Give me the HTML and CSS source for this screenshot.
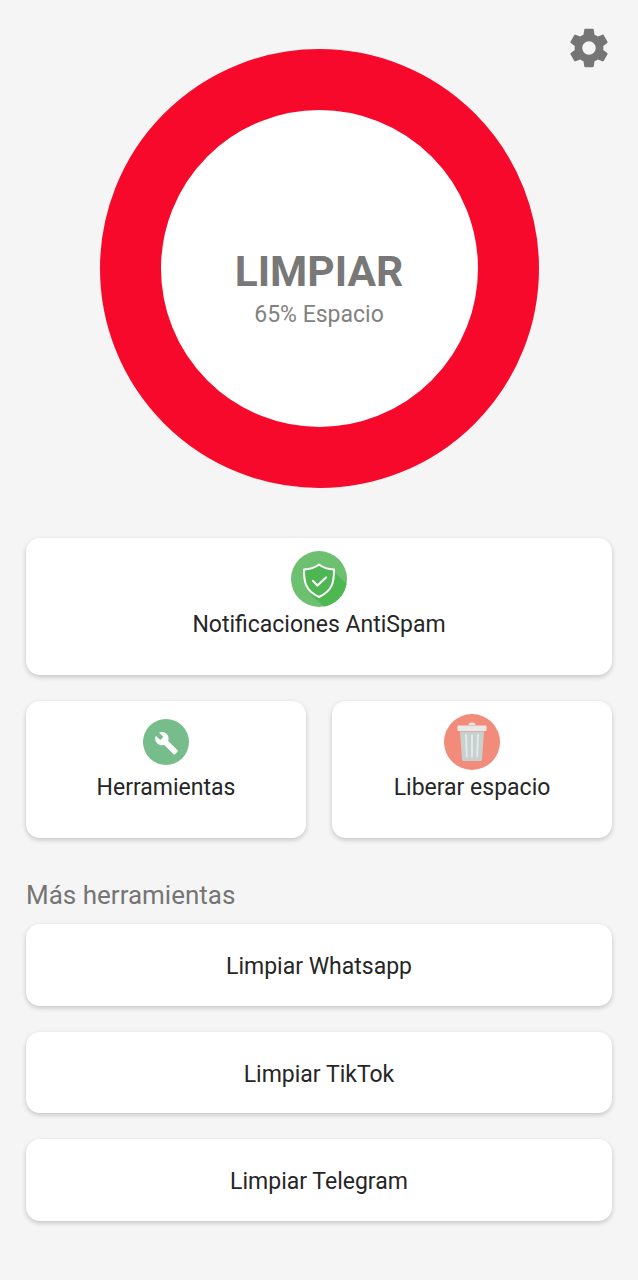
FILE: index.html
```html
<!DOCTYPE html>
<html lang="es">
<head>
    <meta charset="UTF-8">
    <meta name="viewport" content="width=device-width, initial-scale=1.0">
    <title>Limpiar</title>
    <link rel="stylesheet" href="styles.css">
</head>
<body>
    <div class="page">
        <section class="hero">
            <button class="settings" aria-label="Ajustes">
                <svg viewBox="0 0 24 24" width="46" height="46">
                    <path fill="#757575" fill-rule="evenodd" d="M19.43 12.98c.04-.32.07-.64.07-.98s-.03-.66-.07-.98l2.11-1.65c.19-.15.24-.42.12-.64l-2-3.46c-.12-.22-.39-.3-.61-.22l-2.49 1c-.52-.4-1.08-.73-1.69-.98l-.38-2.65C14.46 2.18 14.25 2 14 2h-4c-.25 0-.46.18-.49.42l-.38 2.65c-.61.25-1.17.59-1.69.98l-2.49-1c-.23-.09-.49 0-.61.22l-2 3.46c-.13.22-.07.49.12.64l2.11 1.65c-.04.32-.07.65-.07.98s.03.66.07.98l-2.11 1.65c-.19.15-.24.42-.12.64l2 3.46c.12.22.39.3.61.22l2.49-1c.52.4 1.08.73 1.69.98l.38 2.65c.03.24.24.42.49.42h4c.25 0 .46-.18.49-.42l.38-2.65c.61-.25 1.17-.59 1.69-.98l2.49 1c.23.09.49 0 .61-.22l2-3.46c.12-.22.07-.49-.12-.64l-2.11-1.65zM12 15.5c-1.93 0-3.5-1.57-3.5-3.5s1.57-3.5 3.5-3.5 3.5 1.57 3.5 3.5-1.57 3.5-3.5 3.5z"/>
                </svg>
            </button>
            <div class="ring">
                <div class="ring-title">LIMPIAR</div>
                <div class="ring-sub">65% Espacio</div>
            </div>
        </section>

        <section class="tools">
            <div class="card card-wide">
                <svg class="icon" viewBox="0 0 56 56" width="56" height="56">
                    <circle cx="28" cy="28" r="28" fill="#6cc070"/>
                    <path fill="#4cb84f" d="M42 20 L55.500 33 A28 28 0 0 1 33 55.500 L20 44 Z"/>
                    <path fill="#4fb654" stroke="#fff" stroke-width="2" stroke-linejoin="round" d="M28 13.500c4 3.200 9 4.800 15 5 0 11-.5 21-15 27.500-14.500-6.500-15-16.500-15-27.500 6-.2 11-1.800 15-5z"/>
                    <path fill="none" stroke="#fff" stroke-width="2.200" stroke-linecap="round" stroke-linejoin="round" d="M22 30l4.500 4.500 8.500-8"/>
                </svg>
                <span class="card-label">Notificaciones AntiSpam</span>
            </div>
            <div class="card-row">
                <div class="card">
                    <svg class="icon icon-tool" viewBox="0 0 46 46" width="46" height="46">
                        <circle cx="23" cy="23" r="23" fill="#77bd8b"/>
                        <path fill="#fff" d="M34.500 31.300 25.200 22c.9-2.400.4-5.200-1.600-7.100-2.100-2.100-5.200-2.500-7.600-1.300l4.400 4.400-3.100 3.100-4.500-4.400c-1.200 2.500-.7 5.500 1.400 7.600 1.900 1.900 4.700 2.500 7.100 1.600l9.300 9.300c.4.400 1 .4 1.400 0l2.400-2.400c.5-.4.5-1.100.1-1.500z"/>
                    </svg>
                    <span class="card-label">Herramientas</span>
                </div>
                <div class="card">
                    <svg class="icon" viewBox="0 0 56 56" width="56" height="56">
                        <circle cx="28" cy="28" r="28" fill="#f28b7a"/>
                        <path fill="#e3e6e4" d="M25 10c0-1 1.300-1.500 3-1.500s3 .5 3 1.500l1 1h-8z"/>
                        <path fill="#e8eaea" d="M14.500 11.500h27c.8 0 1 .5 1 1v3.500c0 .5-.3 1-1 1h-27c-.7 0-1-.5-1-1v-3.500c0-.5.2-1 1-1z"/>
                        <path fill="#c8cfcf" d="M16 17.500h24l-2 28c-.1 1-.8 1.500-1.500 1.500h-17c-.7 0-1.400-.5-1.500-1.500z"/>
                        <path fill="none" stroke="#e6eaea" stroke-width="1.800" stroke-linecap="round" d="M22 21l.8 21.500M28 21v21.500M34 21l-.8 21.500"/>
                    </svg>
                    <span class="card-label">Liberar espacio</span>
                </div>
            </div>
        </section>

        <h2 class="section-title">Más herramientas</h2>
        <div class="btn-list">
            <div class="btn">Limpiar Whatsapp</div>
            <div class="btn">Limpiar TikTok</div>
            <div class="btn">Limpiar Telegram</div>
        </div>
    </div>
</body>
</html>
```

FILE: styles.css
```css
* {
    box-sizing: border-box;
}

body {
    margin: 0;
    background-color: #f5f5f5;
    font-family: Roboto, 'Liberation Sans', sans-serif;
    color: #262626;
}

.page {
    height: 1280px;
    padding: 49px 26px 0;
}

.hero {
    position: relative;
    display: flex;
    justify-content: center;
}

.settings {
    position: absolute;
    top: -24px;
    right: 0;
    width: 46px;
    height: 46px;
    padding: 0;
    border: none;
    background: none;
}

.ring {
    width: 439px;
    height: 439px;
    border: 61px solid #f7092b;
    border-radius: 50%;
    background-color: #ffffff;
    display: flex;
    flex-direction: column;
    align-items: center;
    padding-top: 137px;
}

.ring-title {
    font-size: 42.5px;
    line-height: 50px;
    font-weight: 700;
    color: #787878;
}

.ring-sub {
    font-size: 23px;
    line-height: 28px;
    color: #828282;
    margin-top: 4px;
}

.tools {
    margin-top: 50px;
    display: flex;
    flex-direction: column;
    gap: 26px;
}

.card-row {
    display: grid;
    grid-template-columns: 1fr 1fr;
    gap: 26px;
}

.card {
    height: 137px;
    background-color: #ffffff;
    border-radius: 14px;
    box-shadow: 0 2px 5px rgba(0, 0, 0, 0.2);
    display: flex;
    flex-direction: column;
    align-items: center;
    justify-content: flex-end;
    padding-bottom: 35px;
}

.icon {
    flex: none;
    margin-bottom: 3px;
}

.icon-tool {
    margin-bottom: 8px;
}

.card-label {
    font-size: 23px;
    line-height: 30px;
}

.section-title {
    margin: 42px 0 14px;
    font-size: 26px;
    line-height: 30px;
    font-weight: 400;
    color: #757575;
}

.btn-list {
    display: flex;
    flex-direction: column;
    gap: 26px;
}

.btn {
    height: 81.5px;
    padding-top: 4px;
    background-color: #ffffff;
    border-radius: 14px;
    box-shadow: 0 2px 5px rgba(0, 0, 0, 0.2);
    display: flex;
    align-items: center;
    justify-content: center;
    font-size: 23px;
}
```
